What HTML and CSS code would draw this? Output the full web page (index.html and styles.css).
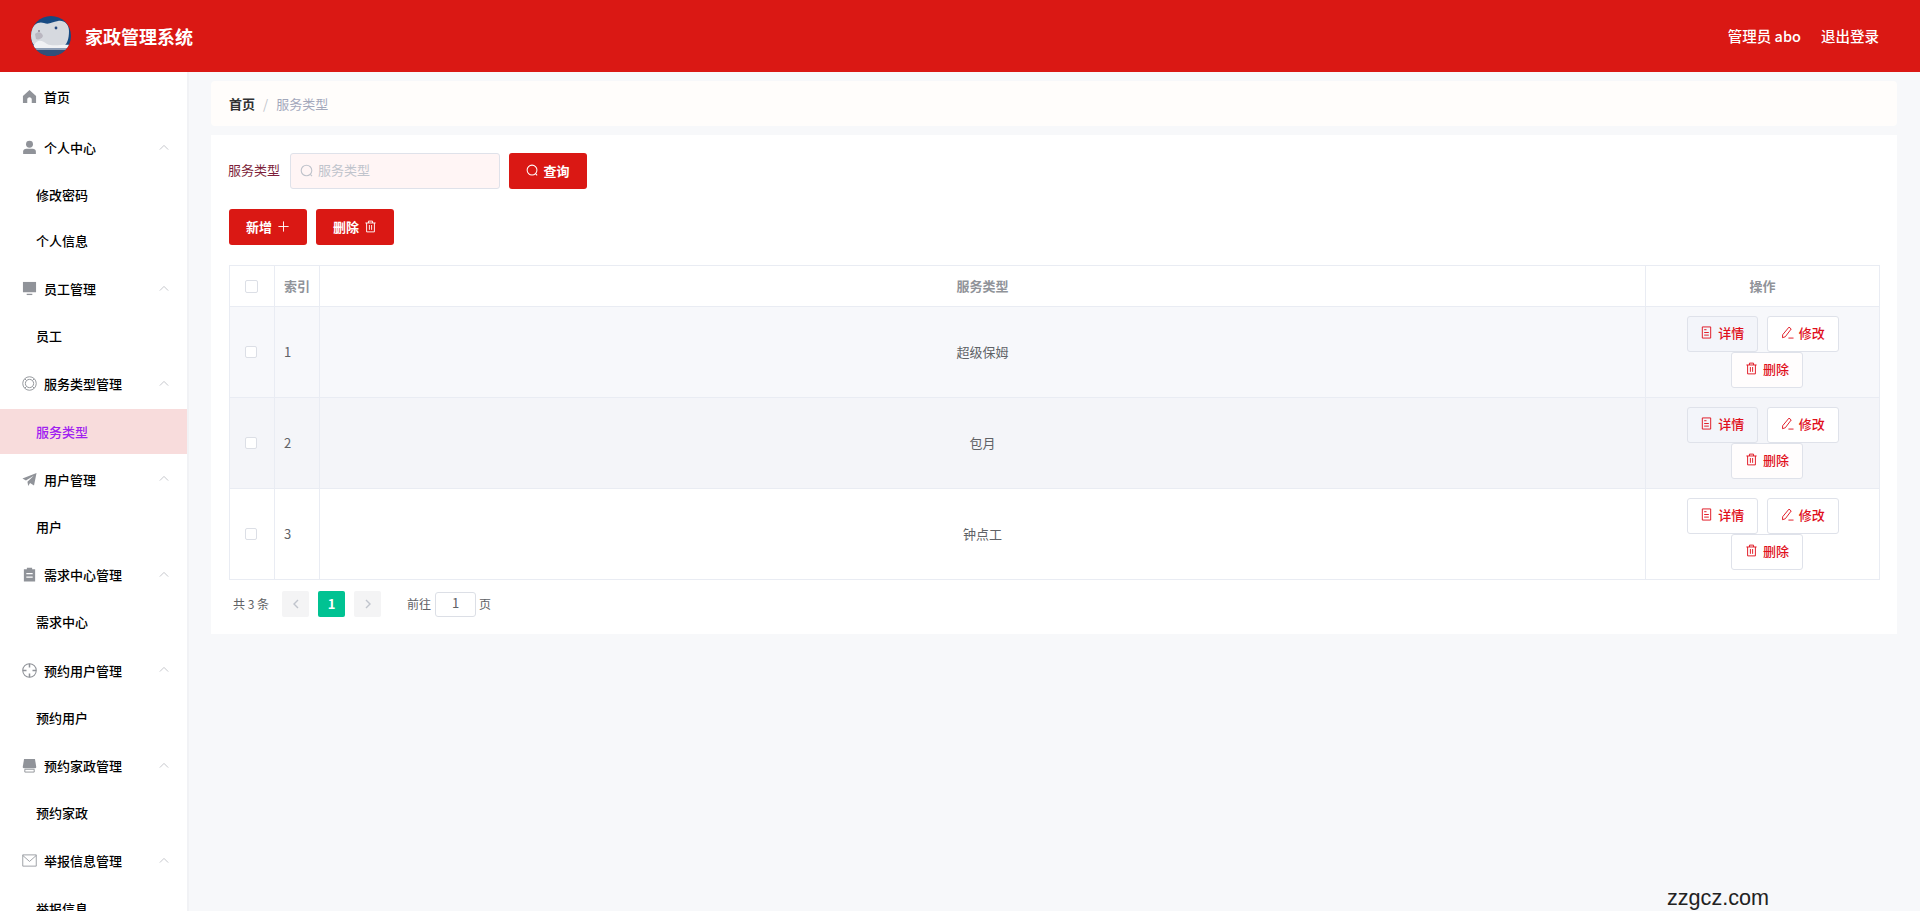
FILE: index.html
```html
<!DOCTYPE html>
<html lang="zh-CN">
<head>
<meta charset="utf-8">
<title>家政管理系统</title>
<link rel="stylesheet" href="styles.css">
</head>
<body>
<svg class="defs" width="0" height="0" aria-hidden="true">
  <symbol id="i-chev" viewBox="0 0 12 8"><path d="M1 6.5 6 1.5l5 5" fill="none" stroke="currentColor" stroke-width="1"/></symbol>
  <symbol id="i-home" viewBox="0 0 16 16"><path d="M8 1 15 7.5V15H10.4V11.2C10.4 9.8 9.4 8.8 8 8.8S5.6 9.8 5.6 11.2V15H1V7.5Z" fill="currentColor"/></symbol>
  <symbol id="i-user" viewBox="0 0 16 16"><circle cx="8" cy="4.6" r="3.7" fill="currentColor"/><path d="M1.2 15V12.2C1.2 10.4 2.8 9.4 4.6 9.4H11.4C13.2 9.4 14.8 10.4 14.8 12.2V15Z" fill="currentColor"/></symbol>
  <symbol id="i-monitor" viewBox="0 0 16 16"><path d="M1 1H15V12H1Z" fill="currentColor"/><path d="M5 15H11V13.6H5Z" fill="currentColor"/></symbol>
  <symbol id="i-help" viewBox="0 0 16 16"><g fill="none" stroke="currentColor"><circle cx="8" cy="8" r="7.2"/><circle cx="8" cy="8" r="4.4"/><path d="M3 3 4.9 4.9M13 3 11.1 4.9M3 13 4.9 11.1M13 13 11.1 11.1"/></g></symbol>
  <symbol id="i-plane" viewBox="0 0 16 16"><path d="M15.5 1 12.8 14.5 8.6 11.8 6.6 15 5.8 10.4 12.5 4 4.2 9 .5 7Z" fill="currentColor"/></symbol>
  <symbol id="i-order" viewBox="0 0 16 16"><path d="M2 2.4H5.2V.8H10.8V2.4H14V15.5H2ZM4.6 6.5V7.8H11.4V6.5ZM4.6 10.2V11.5H11.4V10.2Z" fill="currentColor" fill-rule="evenodd"/></symbol>
  <symbol id="i-aim" viewBox="0 0 16 16"><g fill="none" stroke="currentColor" stroke-width="1.1"><circle cx="8" cy="8" r="7.2"/><path d="M8 .8v4M8 11.2v4M.8 8h4M11.2 8h4" stroke-width="1.6"/></g></symbol>
  <symbol id="i-shop" viewBox="0 0 16 16"><path d="M2.2 1H13.8L15.2 9.5C15.2 10.6 14.2 11 13.4 11H2.6C1.8 11 .8 10.6 .8 9.5Z" fill="currentColor"/><path d="M3 12H13V15H3Z" fill="none" stroke="currentColor" stroke-width="1"/></symbol>
  <symbol id="i-mail" viewBox="0 0 16 16"><g fill="none" stroke="currentColor" stroke-width=".9"><path d="M.8 2H15.2V14H.8Z"/><path d="M.8 2.6 8 9 15.2 2.6"/></g></symbol>
  <symbol id="i-search" viewBox="0 0 14 14"><g fill="none" stroke="currentColor" stroke-width="1.1"><circle cx="6.5" cy="6.5" r="5.3"/><path d="M10.3 10.3 12 12.2"/></g></symbol>
  <symbol id="i-plus" viewBox="0 0 14 14"><path d="M7 1.5v11M1.5 7h11" fill="none" stroke="currentColor" stroke-width="1"/></symbol>
  <symbol id="i-trash" viewBox="0 0 14 14"><g fill="none" stroke="currentColor" stroke-width="1"><path d="M1.5 3.2h11M2.8 3.2V12.8H11.2V3.2M4.8 3.2V1.2H9.2V3.2M5.8 5.4V10.6M8.2 5.4V10.6"/></g></symbol>
  <symbol id="i-doc" viewBox="0 0 14 14"><g fill="none" stroke="currentColor" stroke-width="1"><path d="M2.5 1H11.5V13H2.5Z"/><path d="M4.5 4h2.5M4.5 7h5M4.5 9.8h5"/></g></symbol>
  <symbol id="i-edit" viewBox="0 0 14 14"><g fill="none" stroke="currentColor" stroke-width="1"><path d="M8.6 1.2 11 3.2 4.6 11.6 1.6 12.6 1.8 9.4Z"/><path d="M8 13h5.5"/></g></symbol>
  <symbol id="i-left" viewBox="0 0 8 12"><path d="M6 2 2 6l4 4" fill="none" stroke="currentColor" stroke-width="1.4"/></symbol>
  <symbol id="i-right" viewBox="0 0 8 12"><path d="M2 2l4 4-4 4" fill="none" stroke="currentColor" stroke-width="1.4"/></symbol>
</svg>

<header class="topbar">
  <div class="brand">
    <svg class="logo" viewBox="0 0 40 40" aria-hidden="true">
      <defs>
        <clipPath id="logo-clip"><circle cx="20" cy="20" r="20"/></clipPath>
        <filter id="logo-soft" x="-10%" y="-10%" width="120%" height="120%"><feGaussianBlur stdDeviation=".7"/></filter>
      </defs>
      <g clip-path="url(#logo-clip)">
        <rect width="40" height="40" fill="#174a82"/>
        <g filter="url(#logo-soft)">
          <rect y="29" width="40" height="6" fill="#8d9db5"/>
          <path d="M0 15C2 8 8 5 13 7 18 9 21 6 27 5 33 4 38 8 38 15 38 23 36 28 33 30H12L3 29C0 26 -1 20 0 15Z" fill="#d6d9df"/>
          <path d="M3 29C7 22 12 25 16 28 22 31 32 28 39 29V32H3Z" fill="#f0f1f4"/>
          <path d="M4 18C7 15 11 16 12 20 11 23 7 24 5 23Z" fill="#b9b6c0"/>
          <circle cx="8" cy="15" r="1" fill="#8f7f90"/>
          <circle cx="25" cy="12" r="1.4" fill="#274a80"/>
          <rect y="34" width="40" height="6" fill="#31507a"/>
        </g>
      </g>
    </svg>
    <span class="brand-name">家政管理系统</span>
  </div>
  <nav class="top-links">
    <span>管理员 abo</span>
    <span>退出登录</span>
  </nav>
</header>

<div class="shell">
  <aside class="sidebar">
    <div class="menu-title menu-home"><svg class="menu-icon"><use href="#i-home"/></svg><span>首页</span></div>

    <div class="menu-title"><svg class="menu-icon"><use href="#i-user"/></svg><span>个人中心</span><svg class="chev"><use href="#i-chev"/></svg></div>
    <div class="menu-sub">修改密码</div>
    <div class="menu-sub">个人信息</div>

    <div class="menu-title"><svg class="menu-icon"><use href="#i-monitor"/></svg><span>员工管理</span><svg class="chev"><use href="#i-chev"/></svg></div>
    <div class="menu-sub">员工</div>

    <div class="menu-title"><svg class="menu-icon"><use href="#i-help"/></svg><span>服务类型管理</span><svg class="chev"><use href="#i-chev"/></svg></div>
    <div class="menu-sub is-active">服务类型</div>

    <div class="menu-title"><svg class="menu-icon"><use href="#i-plane"/></svg><span>用户管理</span><svg class="chev"><use href="#i-chev"/></svg></div>
    <div class="menu-sub">用户</div>

    <div class="menu-title"><svg class="menu-icon"><use href="#i-order"/></svg><span>需求中心管理</span><svg class="chev"><use href="#i-chev"/></svg></div>
    <div class="menu-sub">需求中心</div>

    <div class="menu-title"><svg class="menu-icon"><use href="#i-aim"/></svg><span>预约用户管理</span><svg class="chev"><use href="#i-chev"/></svg></div>
    <div class="menu-sub">预约用户</div>

    <div class="menu-title"><svg class="menu-icon"><use href="#i-shop"/></svg><span>预约家政管理</span><svg class="chev"><use href="#i-chev"/></svg></div>
    <div class="menu-sub">预约家政</div>

    <div class="menu-title"><svg class="menu-icon"><use href="#i-mail"/></svg><span>举报信息管理</span><svg class="chev"><use href="#i-chev"/></svg></div>
    <div class="menu-sub">举报信息</div>
  </aside>

  <main class="content">
    <div class="crumbs">
      <b>首页</b><i>/</i><span>服务类型</span>
    </div>

    <section class="panel">
      <div class="search-row">
        <label class="search-label">服务类型</label>
        <div class="search-input"><svg class="search-ico"><use href="#i-search"/></svg><span>服务类型</span></div>
        <button class="btn btn-red"><svg class="ico"><use href="#i-search"/></svg>查询</button>
      </div>

      <div class="tool-row">
        <button class="btn btn-red">新增<svg class="ico ico-after"><use href="#i-plus"/></svg></button>
        <button class="btn btn-red">删除<svg class="ico ico-after"><use href="#i-trash"/></svg></button>
      </div>

      <table class="grid">
        <colgroup><col class="c-check"><col class="c-index"><col><col class="c-actions"></colgroup>
        <thead>
          <tr>
            <th class="cell-check"><span class="check check-head"></span></th>
            <th class="left">索引</th>
            <th>服务类型</th>
            <th>操作</th>
          </tr>
        </thead>
        <tbody>
          <tr class="row-a">
            <td class="cell-check"><span class="check"></span></td>
            <td class="left">1</td>
            <td>超级保姆</td>
            <td class="actions"><div class="action-wrap">
              <button class="btn-line btn-tint"><svg class="ico"><use href="#i-doc"/></svg>详情</button>
              <button class="btn-line"><svg class="ico"><use href="#i-edit"/></svg>修改</button>
              <button class="btn-line btn-warm"><svg class="ico"><use href="#i-trash"/></svg>删除</button>
            </div></td>
          </tr>
          <tr class="row-b">
            <td class="cell-check"><span class="check"></span></td>
            <td class="left">2</td>
            <td>包月</td>
            <td class="actions"><div class="action-wrap">
              <button class="btn-line btn-tint"><svg class="ico"><use href="#i-doc"/></svg>详情</button>
              <button class="btn-line"><svg class="ico"><use href="#i-edit"/></svg>修改</button>
              <button class="btn-line btn-warm"><svg class="ico"><use href="#i-trash"/></svg>删除</button>
            </div></td>
          </tr>
          <tr>
            <td class="cell-check"><span class="check"></span></td>
            <td class="left">3</td>
            <td>钟点工</td>
            <td class="actions"><div class="action-wrap">
              <button class="btn-line"><svg class="ico"><use href="#i-doc"/></svg>详情</button>
              <button class="btn-line"><svg class="ico"><use href="#i-edit"/></svg>修改</button>
              <button class="btn-line"><svg class="ico"><use href="#i-trash"/></svg>删除</button>
            </div></td>
          </tr>
        </tbody>
      </table>

      <div class="pager">
        <span class="pager-total">共 3 条</span>
        <span class="page-btn"><svg class="page-arrow"><use href="#i-left"/></svg></span>
        <span class="page-btn page-on">1</span>
        <span class="page-btn"><svg class="page-arrow"><use href="#i-right"/></svg></span>
        <span class="pager-goto">前往</span>
        <span class="page-input">1</span>
        <span class="pager-unit">页</span>
      </div>
    </section>
  </main>
</div>

<div class="watermark">zzgcz.com</div>
</body>
</html>
```

FILE: styles.css
```css
* { box-sizing: border-box; }
html, body { margin: 0; height: 911px; overflow: hidden; }
body {
  font-family: "Noto Sans CJK SC", "Noto Sans", sans-serif;
  font-size: 13px;
  background: #f7f8fa;
  color: #606266;
  position: relative;
}
.defs { position: absolute; }

.topbar {
  height: 72px;
  background: #da1814;
  color: #fff;
  display: flex;
  align-items: center;
  justify-content: space-between;
  padding: 0 41px 0 31px;
}
.brand { display: flex; align-items: center; gap: 14px; }
.logo { width: 40px; height: 40px; display: block; }
.brand-name { font-size: 18px; font-weight: 700; line-height: 24px; }
.top-links { display: flex; gap: 20px; font-size: 14.5px; font-weight: 500; padding-bottom: 1px; }

.shell { display: flex; height: 839px; }
.sidebar {
  width: 189px;
  flex: none;
  background: #fff;
  border-right: 2px solid #f1f2f5;
  overflow: hidden;
  color: #000;
  font-weight: 500;
}
.menu-title {
  height: 50px;
  display: flex;
  align-items: center;
  padding: 0 0 0 22px;
  position: relative;
}
.menu-home { height: 50.8px; padding-bottom: 1px; }
.menu-icon { width: 15px; height: 15px; color: #909399; margin-right: 7px; flex: none; }
.chev { width: 10px; height: 7px; color: #b9bcc2; position: absolute; left: 159px; top: 21px; }
.menu-sub {
  height: 45.4px;
  display: flex;
  align-items: center;
  padding: 0 0 1px 36px;
}
.menu-sub.is-active { background: #f8dcdc; color: #a020f0; padding-bottom: 0; }

.content { flex: 1; min-width: 0; padding: 9px 23px 0 22px; }
.crumbs {
  height: 45px;
  background: #fffdfb;
  border-radius: 4px;
  display: flex;
  align-items: center;
  padding: 0 18px;
  color: #a3a8bb;
}
.crumbs b { color: #303133; font-weight: 700; }
.crumbs i { font-style: normal; margin: 0 8px; color: #c0c4cc; }

.panel {
  margin-top: 9px;
  background: #fff;
  height: 499px;
  padding: 18px 17px 18px 18px;
}
.search-row { display: flex; align-items: center; height: 36px; }
.search-label { width: 62px; margin-left: -1px; color: #7d1f3a; padding-bottom: 3px; }
.search-input {
  width: 210px;
  height: 36px;
  background: #fff5f5;
  border: 1px solid #dfe2ea;
  border-radius: 3px;
  display: flex;
  align-items: center;
  padding: 0 0 0 9px;
  color: #c0c4cc;
}
.search-input span { padding-bottom: 3px; }
.search-ico { width: 14px; height: 14px; margin-right: 4px; color: #c0c4cc; }
.btn {
  width: 78px;
  height: 36px;
  border: 0;
  border-radius: 3px;
  background: #da1814;
  color: #fff;
  font: 700 13px "Noto Sans CJK SC", "Noto Sans", sans-serif;
  display: inline-flex;
  align-items: center;
  justify-content: center;
  padding: 0 0 2px;
}
.search-row .btn { margin-left: 9px; }
.ico { width: 13px; height: 13px; margin-right: 4px; flex: none; }
.ico-after { margin: 0 0 0 5px; }
.tool-row { display: flex; gap: 9px; margin-top: 20px; }

.grid {
  width: 100%;
  margin-top: 20px;
  border-collapse: collapse;
  table-layout: fixed;
  text-align: center;
}
.c-check, .c-index { width: 45px; }
.c-actions { width: 234px; }
.grid th, .grid td { border: 1px solid #e9ecf3; padding: 0 0 2px; }
.grid th { height: 41px; color: #909399; font-weight: 700; }
.grid td { height: 91px; }
.grid .left { text-align: left; padding-left: 9px; }
.grid .cell-check { padding: 0 2px 0 0; }
.row-a td { background: #f7f8fb; }
.row-b td { background: #f4f5f9; }
.check {
  display: block;
  width: 12px;
  height: 12px;
  margin: 0 auto;
  background: #fff;
  border: 1px solid #dcdfe6;
  border-radius: 2px;
}
.check-head { width: 13px; height: 13px; }

.grid td.actions { vertical-align: top; padding: 0; }
.action-wrap {
  display: flex;
  flex-wrap: wrap;
  justify-content: center;
  padding: 9px 10px 0;
}
.btn-line {
  width: 71.5px;
  height: 36px;
  background: #fff;
  border: 1px solid #dfe2ea;
  border-radius: 3px;
  color: #e0101c;
  font: 500 13px "Noto Sans CJK SC", "Noto Sans", sans-serif;
  display: inline-flex;
  align-items: center;
  justify-content: center;
  padding: 0 0 3px;
}
.btn-line + .btn-line { margin-left: 9px; }
.btn-line .ico { margin-right: 5px; }
.btn-tint { background: #f3f5fa; }
.btn-warm { background: #fffdfd; }

.pager { display: flex; align-items: center; margin-top: 11px; height: 26px; font-size: 12px; }
.pager > span { padding-bottom: 1px; }
.pager-total { margin-left: 4px; width: 49px; }
.page-btn {
  width: 27px;
  height: 26px;
  margin-right: 9px;
  background: #f4f4f5;
  border-radius: 2px;
  display: flex;
  align-items: center;
  justify-content: center;
  color: #c0c4cc;
}
.page-on { background: #00c292; color: #fff; font-weight: 700; font-size: 13px; }
.page-arrow { width: 8px; height: 12px; }
.pager-goto { margin-left: 17px; margin-right: 4px; }
.page-input {
  width: 41px;
  height: 25px;
  border: 1px solid #dcdfe6;
  border-radius: 3px;
  text-align: center;
  line-height: 20px;
  font-size: 13px;
  margin-right: 3px;
}

.watermark {
  position: absolute;
  left: 1667px;
  top: 886px;
  font: 21.6px/24px "Liberation Sans", Arial, sans-serif;
  color: #222;
}
```
